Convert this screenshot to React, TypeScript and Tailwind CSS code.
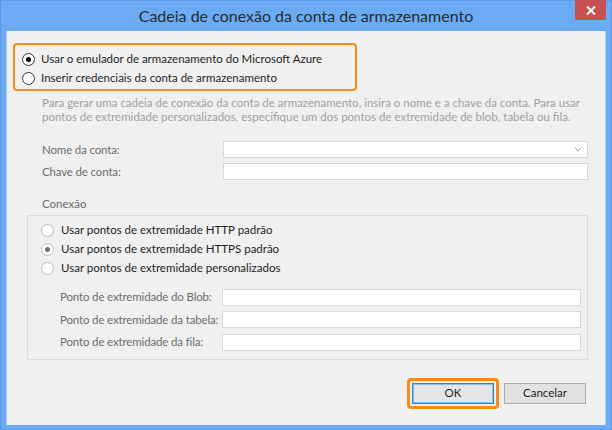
import React from 'react';

const FONT = { fontFamily: 'Lato, "Liberation Sans", sans-serif' };

function Radio({ checked, dim }: { checked?: boolean; dim?: boolean }) {
  return (
    <span
      className={`flex h-[13px] w-[13px] shrink-0 items-center justify-center rounded-full border bg-white ${
        dim ? 'border-[#bcbcbc]' : 'border-[#333333]'
      }`}
    >
      {checked && (
        <span className={`h-[5px] w-[5px] rounded-full ${dim ? 'bg-[#6d6d6d]' : 'bg-black'}`} />
      )}
    </span>
  );
}

function Field({ label, combo, labelW, inputW }: { label: string; combo?: boolean; labelW: string; inputW: string }) {
  return (
    <div className="flex h-[17px] items-center">
      <span className={`${labelW} shrink-0 whitespace-nowrap text-[11.5px] tracking-[-0.15px] text-[#6d6d6d]`}>{label}</span>
      <div className={`${inputW} relative h-[17px] border border-[#d9d9d9] bg-white`}>
        {combo && (
          <svg className="absolute right-[5px] top-[5px]" width="8" height="5" viewBox="0 0 8 5">
            <path d="M0.5 0.5 L4 4 L7.5 0.5" fill="none" stroke="#a8a8a8" strokeWidth="1" />
          </svg>
        )}
      </div>
    </div>
  );
}

export default function App() {
  return (
    <div className="h-[430px] w-[612px] border border-[#5a9ae0] bg-[#6aabf4] leading-none text-[#1e1e1e]" style={FONT}>
      {/* title bar */}
      <div className="relative flex h-[30px] items-center justify-center">
        <span className="whitespace-nowrap text-[16px] text-[#2b2b2b]">Cadeia de conexão da conta de armazenamento</span>
        <button className="absolute right-[5px] top-[-1px] flex h-[20px] w-[31px] items-center justify-center bg-[#c75050]">
          <svg width="10" height="9" viewBox="0 0 10 9">
            <path d="M1 0.5 L9 8.5 M9 0.5 L1 8.5" stroke="white" strokeWidth="2" />
          </svg>
        </button>
      </div>

      {/* client area */}
      <div className="mx-[5px] h-[394px] border-l border-r border-[#a9d0fa] bg-[#f0f0f0]">
        <div className="pl-[6px] pt-[12px]">
          <div className="flex h-[48px] w-[344px] flex-col justify-center rounded-[4px] border-2 border-[#fb8a17] pl-[7px] pt-[3px]">
            <div className="flex h-[19px] items-center gap-[6px]">
              <Radio checked />
              <span className="whitespace-nowrap text-[11.5px]">Usar o emulador de armazenamento do Microsoft Azure</span>
            </div>
            <div className="flex h-[19px] items-center gap-[6px]">
              <Radio />
              <span className="whitespace-nowrap text-[11.5px]">Inserir credenciais da conta de armazenamento</span>
            </div>
          </div>
        </div>

        <p className="ml-[35px] mt-[5px] whitespace-nowrap text-[11.5px] leading-[14px] text-[#a0a0a0]">
          Para gerar uma cadeia de conexão da conta de armazenamento, insira o nome e a chave da conta. Para usar
          <br />
          pontos de extremidade personalizados, especifique um dos pontos de extremidade de blob, tabela ou fila.
        </p>

        <div className="ml-[35px] mt-[17px] flex flex-col gap-[5px]">
          <Field label="Nome da conta:" combo labelW="w-[181px]" inputW="w-[365px]" />
          <Field label="Chave de conta:" labelW="w-[181px]" inputW="w-[365px]" />
        </div>

        <div className="ml-[35px] mt-[18px] text-[11.5px] text-[#6d6d6d]">Conexão</div>

        <div className="ml-[20px] mt-[5px] h-[145px] w-[561px] border border-[#dcdcdc] pl-[13px] pt-[5px]">
          <div className="flex flex-col">
            {[
              ['Usar pontos de extremidade HTTP padrão', false],
              ['Usar pontos de extremidade HTTPS padrão', true],
              ['Usar pontos de extremidade personalizados', false],
            ].map(([t, c]) => (
              <div key={t as string} className="flex h-[19px] items-center gap-[7px]">
                <Radio dim checked={c as boolean} />
                <span className="whitespace-nowrap text-[11.5px] text-[#1e1e1e]">{t}</span>
              </div>
            ))}
          </div>
          <div className="ml-[19px] mt-[11px] flex flex-col gap-[5.5px]">
            <Field label="Ponto de extremidade do Blob:" labelW="w-[162px]" inputW="w-[359px]" />
            <Field label="Ponto de extremidade da tabela:" labelW="w-[162px]" inputW="w-[359px]" />
            <Field label="Ponto de extremidade da fila:" labelW="w-[162px]" inputW="w-[359px]" />
          </div>
        </div>

        <div className="mr-[19px] mt-[18px] flex items-center justify-end gap-[5px]">
          <div className="rounded-[4px] border-[3px] border-[#fb8a17] p-[2px]">
            <button className="h-[21px] w-[82px] border border-[#3c7fb1] bg-[#e5e5e5] text-[11.5px] text-[#1e1e1e] shadow-[inset_0_0_0_1px_#7fc0f0]">
              OK
            </button>
          </div>
          <button className="h-[21px] w-[82px] border border-[#adadad] bg-[#e1e1e1] text-[11.5px] text-[#1e1e1e]">
            Cancelar
          </button>
        </div>
      </div>
    </div>
  );
}
